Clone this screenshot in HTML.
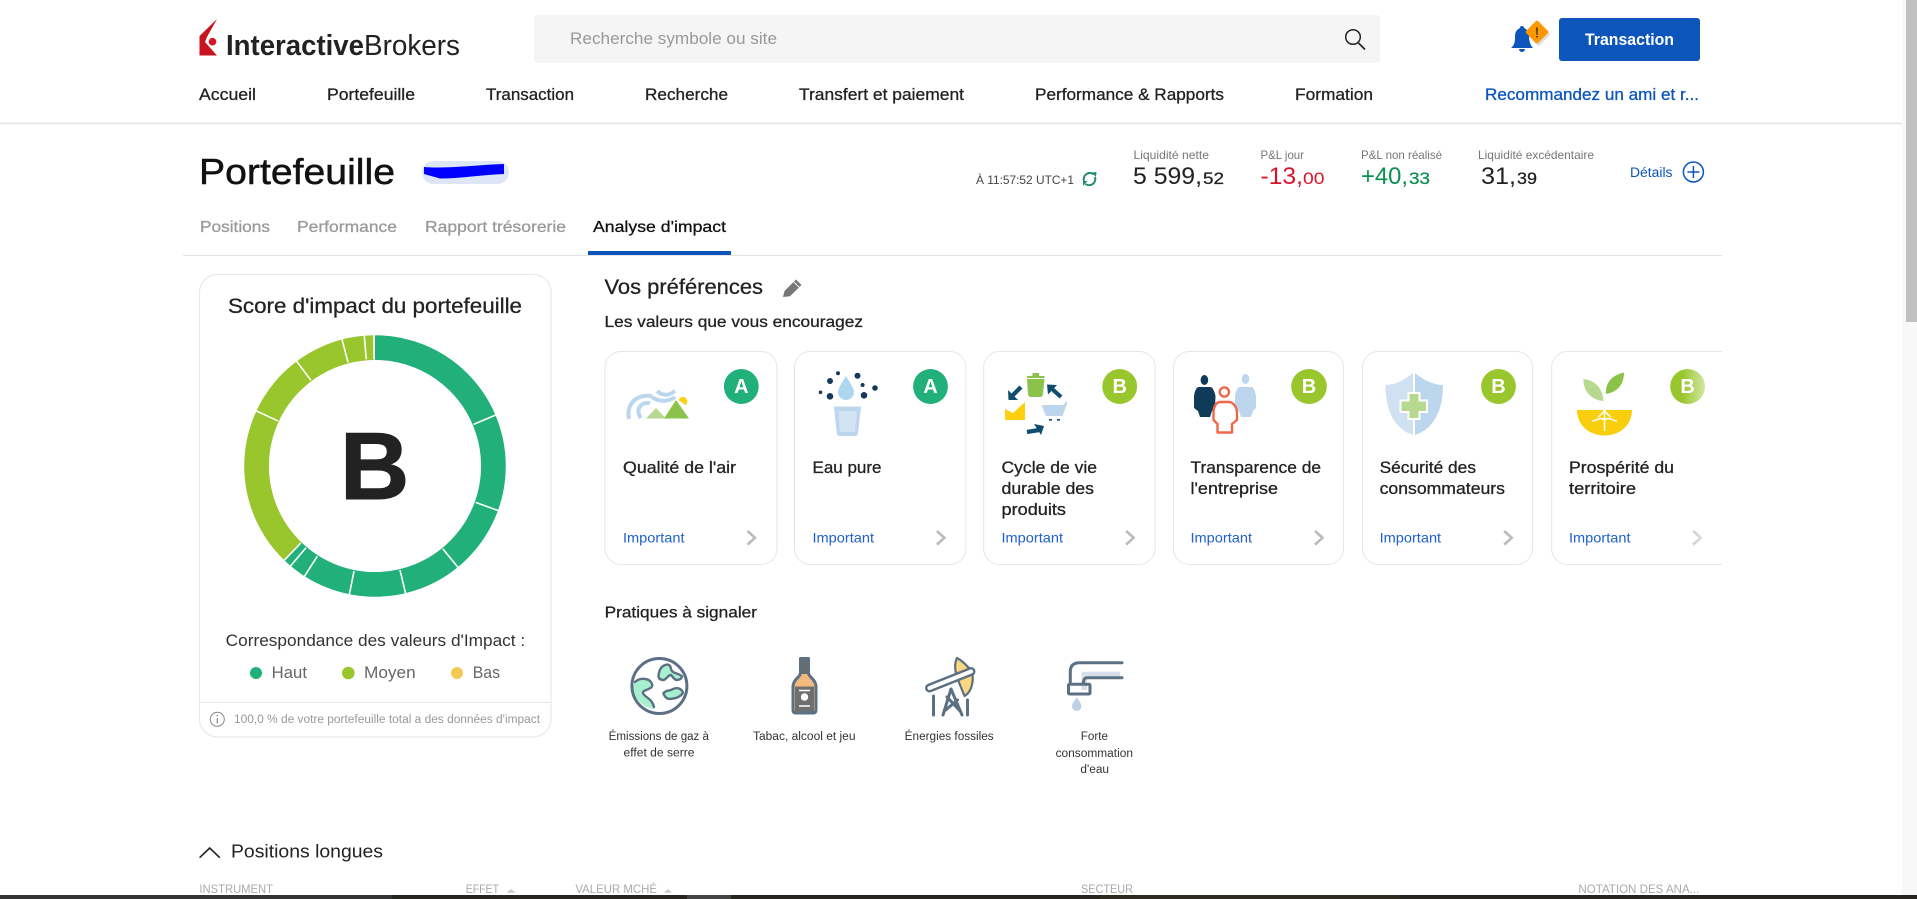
<!DOCTYPE html>
<html lang="fr">
<head>
<meta charset="utf-8">
<title>Portefeuille - Analyse d'impact</title>
<style>
html,body{margin:0;padding:0;background:#fff;width:1917px;height:899px;overflow:hidden}
svg{display:block;font-family:"Liberation Sans",Arial,sans-serif}
.m{stroke-width:.28}
.d{fill:#222;stroke:#222}
.g{fill:#999;stroke:#999}
.b{fill:#0b55bb;stroke:#0b55bb}
.card{fill:#fff;stroke:#e6e6e6;stroke-width:1}
.chev{fill:none;stroke:#bbb;stroke-width:2.6}
.sl{fill:none;stroke:#5b7083;stroke-width:3;stroke-linecap:round;stroke-linejoin:round}
</style>
</head>
<body>
<svg width="1917" height="899" viewBox="0 0 1917 899" xmlns="http://www.w3.org/2000/svg">
<rect width="1917" height="899" fill="#fff"/>

<!-- header -->
<rect x="0" y="122" width="1902" height="1" fill="#f2f2f2"/>
<rect x="0" y="123" width="1902" height="1" fill="#e8e8e8"/>
<rect x="0" y="124" width="1902" height="1" fill="#f7f7f7"/>
<path d="M217 19 L199.5 36 L199.5 55.5 L217 55.5 L205 42 L207 37 Z" fill="#c8141f"/>
<circle cx="212.5" cy="41.7" r="3.8" fill="#d81222"/>
<text x="226" y="55" font-size="29" font-weight="700" fill="#222" textLength="138" lengthAdjust="spacingAndGlyphs">Interactive</text>
<text x="364" y="55" font-size="29" fill="#222" textLength="96" lengthAdjust="spacingAndGlyphs">Brokers</text>
<rect x="534" y="15" width="846" height="48" rx="3" fill="#f5f5f5"/>
<text x="570" y="44" font-size="16.5" fill="#999" textLength="207" lengthAdjust="spacingAndGlyphs">Recherche symbole ou site</text>
<circle cx="1353" cy="37" r="7.3" fill="none" stroke="#222" stroke-width="1.5"/>
<line x1="1358.5" y1="43" x2="1365" y2="49.5" stroke="#222" stroke-width="1.7"/>
<path d="M1511 48 C1515 45 1515 40 1515 36 C1515 31 1518 29 1520 28 a2 2 0 0 1 4 0 C1527 29 1529 32 1529 36 C1529 40 1530 45 1533 48 Z" fill="#0b55bb"/>
<path d="M1519 49 h6 a3 3 0 0 1 -6 0Z" fill="#0b55bb"/>
<rect x="1530" y="26" width="17" height="17" rx="2" transform="rotate(45 1538.5 34.5)" fill="#000" opacity=".13"/>
<rect x="1528.5" y="23.5" width="17" height="17" rx="2" transform="rotate(45 1537 32)" fill="#ff9800"/>
<text x="1537" y="37.5" font-size="15" text-anchor="middle" fill="#222">!</text>
<rect x="1559" y="18" width="141" height="43" rx="3" fill="#0b55bb"/>
<text x="1585" y="45" font-size="17" font-weight="700" fill="#fff" textLength="89" lengthAdjust="spacingAndGlyphs">Transaction</text>

<g class="m d" font-size="16.5">
<text x="199" y="100" textLength="57" lengthAdjust="spacingAndGlyphs">Accueil</text>
<text x="327" y="100" textLength="88" lengthAdjust="spacingAndGlyphs">Portefeuille</text>
<text x="486" y="100" textLength="88" lengthAdjust="spacingAndGlyphs">Transaction</text>
<text x="645" y="100" textLength="83" lengthAdjust="spacingAndGlyphs">Recherche</text>
<text x="799" y="100" textLength="165" lengthAdjust="spacingAndGlyphs">Transfert et paiement</text>
<text x="1035" y="100" textLength="189" lengthAdjust="spacingAndGlyphs">Performance &amp; Rapports</text>
<text x="1295" y="100" textLength="78" lengthAdjust="spacingAndGlyphs">Formation</text>
</g>
<text class="m b" x="1485" y="100" font-size="16.5" textLength="214" lengthAdjust="spacingAndGlyphs">Recommandez un ami et r...</text>

<!-- scrollbar -->
<rect x="1902" y="0" width="15" height="899" fill="#f8f8f8"/>
<rect x="1906" y="0" width="11" height="322" fill="#c1c1c1"/>

<!-- page title -->
<text x="199" y="184" font-size="36" fill="#111" stroke="#111" stroke-width=".5" textLength="196" lengthAdjust="spacingAndGlyphs">Portefeuille</text>
<rect x="422" y="161" width="87" height="23" rx="11.5" fill="#dce6f7"/>
<path d="M424 167 C445 169 475 165 504 164 L504 174 C480 175 460 178.5 440 178.5 L424 174 Z" fill="#0000ff"/>

<!-- stats -->
<text x="976" y="184" font-size="12" fill="#444" textLength="98" lengthAdjust="spacingAndGlyphs">À 11:57:52 UTC+1</text>
<path d="M1084 181 A6.2 6.2 0 0 1 1094 174.5 M1095 177 A6.2 6.2 0 0 1 1085.5 184" fill="none" stroke="#1f8a70" stroke-width="2"/>
<path d="M1092 172.5 L1096.5 172 L1096 177 Z M1083 181 L1087.5 181 L1083 186 Z" fill="#1f8a70"/>
<g font-size="12" fill="#777">
<text x="1133.5" y="159" textLength="75.5" lengthAdjust="spacingAndGlyphs">Liquidité nette</text>
<text x="1260.5" y="159" textLength="43.5" lengthAdjust="spacingAndGlyphs">P&amp;L jour</text>
<text x="1361" y="159" textLength="81" lengthAdjust="spacingAndGlyphs">P&amp;L non réalisé</text>
<text x="1478" y="159" textLength="116" lengthAdjust="spacingAndGlyphs">Liquidité excédentaire</text>
</g>
<g font-size="24" fill="#222">
<text x="1133" y="184" textLength="69" lengthAdjust="spacingAndGlyphs">5 599,</text>
<text x="1203" y="184" font-size="17" class="m" stroke="#222" textLength="21" lengthAdjust="spacingAndGlyphs">52</text>
<text x="1481" y="184" textLength="35" lengthAdjust="spacingAndGlyphs">31,</text>
<text x="1517" y="184" font-size="17" class="m" stroke="#222" textLength="20" lengthAdjust="spacingAndGlyphs">39</text>
</g>
<g font-size="24" fill="#d9142a">
<text x="1260.5" y="184" textLength="42.5" lengthAdjust="spacingAndGlyphs">-13,</text>
<text x="1303" y="184" font-size="17" textLength="21.5" lengthAdjust="spacingAndGlyphs">00</text>
</g>
<g font-size="24" fill="#0a9152">
<text x="1361" y="184" textLength="47" lengthAdjust="spacingAndGlyphs">+40,</text>
<text x="1409" y="184" font-size="17" class="m" stroke="#0a9152" textLength="21" lengthAdjust="spacingAndGlyphs">33</text>
</g>
<text x="1630" y="177" font-size="13.5" fill="#0b55bb" textLength="42.5" lengthAdjust="spacingAndGlyphs">Détails</text>
<circle cx="1693.4" cy="172" r="10" fill="none" stroke="#0b55bb" stroke-width="1.5"/>
<path d="M1693.4 166v12M1687.4 172h12" stroke="#0b55bb" stroke-width="1.5"/>

<!-- tabs -->
<g class="m g" font-size="16">
<text x="200" y="232" textLength="70" lengthAdjust="spacingAndGlyphs">Positions</text>
<text x="297" y="232" textLength="100" lengthAdjust="spacingAndGlyphs">Performance</text>
<text x="425" y="232" textLength="141" lengthAdjust="spacingAndGlyphs">Rapport trésorerie</text>
</g>
<text class="m" x="593" y="232" font-size="16" fill="#111" stroke="#111" textLength="133" lengthAdjust="spacingAndGlyphs">Analyse d'impact</text>
<rect x="183" y="255" width="1539" height="1" fill="#e4e4e4"/>
<rect x="588" y="251" width="143" height="4" fill="#0b55bb"/>

<!-- left card -->
<rect class="card" x="199.5" y="274.5" width="351.5" height="462.5" rx="18"/>
<text class="m d" x="228" y="313" font-size="21" textLength="294" lengthAdjust="spacingAndGlyphs">Score d'impact du portefeuille</text>
<circle cx="375" cy="466" r="118.4" fill="none" stroke="#21b07a" stroke-width="24.7" pathLength="360" stroke-dasharray="223.9 136.1" transform="rotate(-90 375 466)"/>
<circle cx="375" cy="466" r="118.4" fill="none" stroke="#98c62c" stroke-width="24.7" pathLength="360" stroke-dasharray="135.5 224.5" stroke-dashoffset="-223.9" transform="rotate(-90 375 466)"/>
<g stroke="#fff" stroke-width="1.6">
<line x1="375" y1="333" x2="375" y2="359" transform="rotate(67.1 375 466)"/>
<line x1="375" y1="333" x2="375" y2="359" transform="rotate(109.9 375 466)"/>
<line x1="375" y1="333" x2="375" y2="359" transform="rotate(140.7 375 466)"/>
<line x1="375" y1="333" x2="375" y2="359" transform="rotate(166.5 375 466)"/>
<line x1="375" y1="333" x2="375" y2="359" transform="rotate(191.3 375 466)"/>
<line x1="375" y1="333" x2="375" y2="359" transform="rotate(212.6 375 466)"/>
<line x1="375" y1="333" x2="375" y2="359" transform="rotate(220.2 375 466)"/>
<line x1="375" y1="333" x2="375" y2="359" transform="rotate(223.9 375 466)"/>
<line x1="375" y1="333" x2="375" y2="359" transform="rotate(294.9 375 466)"/>
<line x1="375" y1="333" x2="375" y2="359" transform="rotate(323.2 375 466)"/>
<line x1="375" y1="333" x2="375" y2="359" transform="rotate(345.4 375 466)"/>
<line x1="375" y1="333" x2="375" y2="359" transform="rotate(355.3 375 466)"/>
<line x1="375" y1="333" x2="375" y2="359" transform="rotate(359.5 375 466)"/>
</g>
<text x="340" y="499" font-size="96" font-weight="700" fill="#222" stroke="#222" stroke-width="1">B</text>
<text x="225.7" y="646" font-size="16.5" fill="#333" textLength="299.5" lengthAdjust="spacingAndGlyphs">Correspondance des valeurs d'Impact :</text>
<circle cx="256" cy="673" r="6" fill="#21b07a"/>
<circle cx="348.3" cy="673" r="6.3" fill="#98c62c"/>
<circle cx="457" cy="673" r="6" fill="#f4c955"/>
<g font-size="16.5" fill="#666">
<text x="271.7" y="678" textLength="35.3" lengthAdjust="spacingAndGlyphs">Haut</text>
<text x="364" y="678" textLength="51.7" lengthAdjust="spacingAndGlyphs">Moyen</text>
<text x="472.7" y="678" textLength="27.3" lengthAdjust="spacingAndGlyphs">Bas</text>
</g>
<rect x="200" y="702" width="351" height="1" fill="#e6e6e6"/>
<circle cx="217.3" cy="719.3" r="7" fill="none" stroke="#888" stroke-width="1"/>
<path d="M217.3 718v5.5" stroke="#888" stroke-width="1.2"/>
<circle cx="217.3" cy="715.6" r=".8" fill="#888"/>
<text x="234" y="723" font-size="11.5" fill="#999" textLength="306" lengthAdjust="spacingAndGlyphs">100,0 % de votre portefeuille total a des données d'impact</text>

<!-- preferences -->
<text class="m d" x="604.5" y="294" font-size="21" textLength="158.5" lengthAdjust="spacingAndGlyphs">Vos préférences</text>
<path d="M783 297 L784.5 291 L796 279.5 L801.5 285 L790 296.3 Z" fill="#777"/>
<path d="M793.7 281.8 l5.5 5.5" stroke="#fff" stroke-width="1"/>
<text class="m d" x="604.5" y="327" font-size="16" textLength="258.5" lengthAdjust="spacingAndGlyphs">Les valeurs que vous encouragez</text>

<!-- cards -->
<rect class="card" x="605" y="351.5" width="172" height="213" rx="16"/>
<rect class="card" x="794.4" y="351.5" width="171.5" height="213" rx="16"/>
<rect class="card" x="983.6" y="351.5" width="171.5" height="213" rx="16"/>
<rect class="card" x="1173.5" y="351.5" width="170" height="213" rx="16"/>
<rect class="card" x="1362.5" y="351.5" width="170" height="213" rx="16"/>
<rect class="card" x="1551.6" y="351.5" width="190" height="213" rx="16"/>

<!-- icon air -->
<g fill="none" stroke="#bcd6ee" stroke-width="4">
<path d="M629 419 C626 403 637 394 652 396"/>
<path d="M641 418 C635 410 640 402 650 403"/>
<path d="M657 391 C664 397 670 395 675 391"/>
<path d="M652 397 C660 403 670 401 675 397"/>
</g>
<path d="M646 418.5 L656 408 L666 418.5 Z" fill="#b7d98f"/>
<path d="M664 418.5 L676 400 L689 418.5 Z" fill="#8bc34a"/>
<path d="M678.5 400 a4.5 4.5 0 1 1 7 5 Z" fill="#fdd00f"/>

<!-- icon water -->
<g fill="#16395b">
<circle cx="838" cy="373.3" r="2"/><circle cx="857.5" cy="375.7" r="3"/><circle cx="830" cy="381" r="3"/><circle cx="862.6" cy="385" r="2"/><circle cx="875" cy="388" r="2.8"/><circle cx="820.5" cy="392.3" r="1.8"/><circle cx="830" cy="396.3" r="3.3"/><circle cx="864" cy="395.3" r="3.3"/>
</g>
<path d="M846 376 C850 383 854 388 854 392 A8 8 0 0 1 838 392 C838 388 842 383 846 376 Z" fill="#aed6f1"/>
<path d="M834 406.5 H861 L858 433 Q857.8 436 855 436 H840 Q837 436 836.8 433 Z" fill="#bcd6ee"/>
<path d="M838 411 H857 L855 432 H840 Z" fill="#d2e3f3"/>

<!-- icon cycle -->
<path d="M1027 379 H1044.5 L1043 394 Q1042.5 397 1040 397 H1031 Q1028.5 397 1028 394 Z" fill="#8bc34a"/>
<path d="M1027 376 H1044.5 V378 H1027 Z M1032.5 373 H1039 V376 H1032.5 Z" fill="#8bc34a"/>
<g fill="#0f4c6e">
<path d="M1008 390 L1008.5 400 L1018 400 Z"/>
<path d="M1047 384.5 L1057 385 L1048 394.5 Z"/>
<path d="M1034 424 L1044 426 L1041 435 Z"/>
</g>
<g stroke="#0f4c6e" stroke-width="4.2" fill="none">
<path d="M1021 387 L1012 396"/>
<path d="M1061 397 L1051 388"/>
<path d="M1027 432 L1039 430"/>
</g>
<path d="M1041.5 405 H1063 L1067 401 V404 L1062.5 416 H1046 Z" fill="#bcd6ee"/>
<path d="M1049 419 h3 v1.6 h-3z M1057 419 h3 v1.6 h-3z" fill="#0f4c6e"/>
<path d="M1005 409 L1013 413 L1025 402 V420 H1005 Z" fill="#fdd00f"/>

<!-- icon people -->
<ellipse cx="1245.5" cy="379" rx="3.8" ry="5" fill="#bcd6ee"/>
<path d="M1239 387 H1252 Q1255 389 1256 396 L1256 408 L1253 411 L1251 417 H1241 L1239 411 L1235 408 L1235 396 Q1236 389 1239 387 Z" fill="#bcd6ee"/>
<ellipse cx="1204.4" cy="380" rx="3.8" ry="5" fill="#0f3a58"/>
<path d="M1198 387 H1211 Q1214 389 1215.5 396 L1215 408 L1212 411 L1210 417 H1200 L1198 411 L1194 408 L1194 396 Q1195 389 1198 387 Z" fill="#0f3a58"/>
<circle cx="1224.4" cy="392" r="4.6" fill="none" stroke="#f0684a" stroke-width="2.4"/>
<path d="M1219 402 H1230 Q1236 404 1237 412 L1237 420 L1232 424 V432.5 H1217.5 V424 L1213.5 420 L1213.5 412 Q1214 404 1219 402 Z" fill="#fff" stroke="#f0684a" stroke-width="2.4" stroke-linejoin="round"/>

<!-- icon shield -->
<path d="M1413 373 V435 C1400 431 1385.5 418 1385.5 385 C1396 385 1406 379 1413 373 Z" fill="#d0e1f2"/>
<path d="M1415 373 V435 C1428 431 1443 418 1443 385 C1433 385 1422 379 1415 373 Z" fill="#bcd6ee"/>
<path d="M1408.5 393 H1419.5 V400.5 H1427 V412 H1419.5 V419 H1408.5 V412 H1400.5 V400.5 H1408.5 Z" fill="#b7d98f" stroke="#fff" stroke-width="2"/>

<!-- icon plant -->
<path d="M1583.5 379 C1596 380 1603 390 1603.5 401 C1591 400 1583 391 1583.5 379 Z" fill="#b7d98f"/>
<path d="M1624 372.5 C1624 384 1618 392 1606 394 C1605 383 1612 375 1624 372.5 Z" fill="#8bc34a"/>
<path d="M1577 410 H1632 C1632 425 1620 435.5 1604.5 435.5 C1589 435.5 1577 425 1577 410 Z" fill="#f9ce0c"/>
<path d="M1604.5 410 V431 M1604.5 420 C1600 416 1596 421 1592 421 M1604.5 420 C1609 416 1613 421 1617 421 M1604.5 410 C1603 414 1600 415 1598 417 M1604.5 410 C1606 414 1609 415 1611 417" stroke="#fff" stroke-width="1.5" fill="none"/>

<!-- badges -->
<g>
<ellipse cx="741.3" cy="386.5" rx="17.4" ry="17.5" fill="#21b07a"/>
<ellipse cx="930.5" cy="386.5" rx="17.4" ry="17.5" fill="#21b07a"/>
<ellipse cx="1119.7" cy="386.5" rx="17.4" ry="17.5" fill="#98c62c"/>
<ellipse cx="1309" cy="386.5" rx="17.8" ry="17.5" fill="#98c62c"/>
<ellipse cx="1498.5" cy="386.5" rx="17.4" ry="17.5" fill="#98c62c"/>
<ellipse cx="1687.6" cy="386.5" rx="17.4" ry="17.5" fill="#98c62c"/>
</g>
<g font-size="20" font-weight="700" fill="#fff" text-anchor="middle">
<text x="741.3" y="393">A</text><text x="930.5" y="393">A</text><text x="1119.7" y="393">B</text><text x="1309" y="393">B</text><text x="1498.5" y="393">B</text><text x="1687.6" y="393">B</text>
</g>

<!-- card titles -->
<g class="m d" font-size="16.5">
<text x="623" y="473" textLength="113" lengthAdjust="spacingAndGlyphs">Qualité de l'air</text>
<text x="812.5" y="473" textLength="69" lengthAdjust="spacingAndGlyphs">Eau pure</text>
<text x="1001.5" y="473" textLength="95.5" lengthAdjust="spacingAndGlyphs">Cycle de vie</text>
<text x="1001.5" y="494" textLength="92.5" lengthAdjust="spacingAndGlyphs">durable des</text>
<text x="1001.5" y="515" textLength="64.5" lengthAdjust="spacingAndGlyphs">produits</text>
<text x="1190.5" y="473" textLength="130.5" lengthAdjust="spacingAndGlyphs">Transparence de</text>
<text x="1190.5" y="494" textLength="87.5" lengthAdjust="spacingAndGlyphs">l'entreprise</text>
<text x="1379.6" y="473" textLength="96.4" lengthAdjust="spacingAndGlyphs">Sécurité des</text>
<text x="1379.6" y="494" textLength="125.4" lengthAdjust="spacingAndGlyphs">consommateurs</text>
<text x="1569" y="473" textLength="105" lengthAdjust="spacingAndGlyphs">Prospérité du</text>
<text x="1569" y="494" textLength="67" lengthAdjust="spacingAndGlyphs">territoire</text>
</g>
<g font-size="14" fill="#1f5fcf">
<text x="623" y="542.5" textLength="61.5" lengthAdjust="spacingAndGlyphs">Important</text>
<text x="812.5" y="542.5" textLength="61.5" lengthAdjust="spacingAndGlyphs">Important</text>
<text x="1001.5" y="542.5" textLength="61.5" lengthAdjust="spacingAndGlyphs">Important</text>
<text x="1190.5" y="542.5" textLength="61.5" lengthAdjust="spacingAndGlyphs">Important</text>
<text x="1379.6" y="542.5" textLength="61.5" lengthAdjust="spacingAndGlyphs">Important</text>
<text x="1569" y="542.5" textLength="61.5" lengthAdjust="spacingAndGlyphs">Important</text>
</g>
<path class="chev" d="M747.5 531 l7.5 6.8 -7.5 6.8"/>
<path class="chev" d="M936.9 531 l7.5 6.8 -7.5 6.8"/>
<path class="chev" d="M1126.1 531 l7.5 6.8 -7.5 6.8"/>
<path class="chev" d="M1315 531 l7.5 6.8 -7.5 6.8"/>
<path class="chev" d="M1504.2 531 l7.5 6.8 -7.5 6.8"/>
<path class="chev" d="M1693.2 531 l7.5 6.8 -7.5 6.8"/>

<!-- fade on last card: badge and chevron only, the border stays visible up to the clip edge -->
<defs><linearGradient id="fade" x1="0" x2="1" y1="0" y2="0"><stop offset="0" stop-color="#fff" stop-opacity="0"/><stop offset="1" stop-color="#fff"/></linearGradient></defs>
<rect x="1682" y="362" width="40" height="50" fill="url(#fade)"/>
<rect x="1682" y="525" width="40" height="25" fill="url(#fade)"/>
<rect x="1722" y="345" width="24" height="225" fill="#fff"/>

<!-- practices -->
<text class="m d" x="604.6" y="617.7" font-size="16" textLength="152.4" lengthAdjust="spacingAndGlyphs">Pratiques à signaler</text>

<!-- globe -->
<circle cx="659.4" cy="686" r="27" fill="#fff"/>
<path d="M636 682 C640 677 650 678 652 684 C654 690 642 689 643 693 C644 697 652 698 654 709 C644 708 632 698 632 686 Z" fill="#a8efcf"/>
<path class="sl" style="stroke-width:2.4" d="M635 682 C640 677 650 678 652 684 C654 690 642 689 643 693 C644 697 652 698 654 707"/>
<path class="sl" style="fill:#a8efcf;stroke-width:2.4" d="M661.6 667.3 C664 665 667 664 669 665 C672 667 670 670 672.7 671.7 C676 674 681 674 682 676.7 C681 680 678 680 676.4 680 C673 679 672 675 670.8 675 C668 675 666 680 663.4 680 C660 680 658 678 658.6 675 C659 672 660 669 661.6 667.3 Z"/>
<path class="sl" style="fill:#a8efcf;stroke-width:2.4" d="M663.4 693.3 C666 690 668 691 670.8 690 C673 689 676 687.5 678.2 688.3 C681 689 683 691 682.7 693.3 C681 696 677 698 674.5 698.3 C671 699 668 699 667 698.3 C665 697 664 695 663.4 693.3 Z"/>
<circle class="sl" cx="659.4" cy="686" r="27.5"/>

<!-- bottle -->
<path d="M801 660 H808 V673 C808 677 815 679 815.5 686 V711 Q815.5 713 813 713 H796 Q793.5 713 793.5 711 V686 C794 679 801 677 801 673 Z" fill="#f4b97f"/>
<rect x="801" y="660" width="7" height="14" fill="#6b6b6b"/>
<rect x="795" y="686.5" width="19" height="25" fill="#6f6f6f"/>
<circle cx="804.5" cy="697" r="3.7" fill="#fff"/>
<path d="M799 690.5 h11 M799 706 h11" stroke="#fff" stroke-width="1.4"/>
<path class="sl" d="M800.5 658.5 H808.5 V673 C808.5 677 815.5 679 816 686 V710 Q816 713 813 713 H796 Q793 713 793 710 V686 C793.5 679 800.5 677 800.5 673 Z"/>

<!-- pump -->
<path d="M957 658 C954 664 955 672 958 680 L964.5 696 C972 692 974 680 972 672 C968 666 961 660 957 658 Z" fill="#fcd77f" stroke="#5b7083" stroke-width="2.2" stroke-linejoin="round"/>
<path class="sl" d="M951 689 L943 715 M951 689 L962 715 M933.5 696 V715 M967.5 700 V715 M944.5 711 L957.5 700 M947 697 L960 711"/>
<line x1="929.5" y1="688" x2="971" y2="671.5" stroke="#5b7083" stroke-width="9" stroke-linecap="round"/>
<line x1="929.5" y1="688" x2="971" y2="671.5" stroke="#fff" stroke-width="4" stroke-linecap="round"/>

<!-- faucet -->
<path d="M1081.6 671.7 H1120 V677.7 H1087 V690 H1081.6 Z" fill="#d5e0ec"/>
<path class="sl" d="M1122 662.7 H1079.7 Q1070.3 662.7 1070.3 671.7 V684 M1122 677.7 H1087 Q1083.3 677.7 1083.3 684"/>
<rect class="sl" x="1068.5" y="684.3" width="21.5" height="9.7" rx="1"/>
<path d="M1076.7 697.3 C1079 701 1081.5 703.5 1081.5 706.8 A4.8 4.8 0 0 1 1072 706.8 C1072 703.5 1074.5 701 1076.7 697.3 Z" fill="#bcd1e6"/>

<g font-size="11.5" fill="#333">
<text x="608.7" y="740" textLength="100.3" lengthAdjust="spacingAndGlyphs">Émissions de gaz à</text>
<text x="623.5" y="756.7" textLength="71" lengthAdjust="spacingAndGlyphs">effet de serre</text>
<text x="753" y="740" textLength="102.5" lengthAdjust="spacingAndGlyphs">Tabac, alcool et jeu</text>
<text x="904.7" y="740" textLength="89" lengthAdjust="spacingAndGlyphs">Énergies fossiles</text>
<text x="1080.8" y="740" textLength="27.2" lengthAdjust="spacingAndGlyphs">Forte</text>
<text x="1055.6" y="757" textLength="77.4" lengthAdjust="spacingAndGlyphs">consommation</text>
<text x="1080.4" y="773" textLength="28.6" lengthAdjust="spacingAndGlyphs">d'eau</text>
</g>

<!-- positions longues -->
<path d="M199.6 857.7 L209.7 848 L219.8 857.7" fill="none" stroke="#222" stroke-width="1.6"/>
<text x="231" y="857.3" font-size="18" fill="#222" textLength="152" lengthAdjust="spacingAndGlyphs">Positions longues</text>
<g font-size="12" fill="#aaa">
<text x="199.4" y="893" textLength="73.6" lengthAdjust="spacingAndGlyphs">INSTRUMENT</text>
<text x="465.7" y="893" textLength="33.3" lengthAdjust="spacingAndGlyphs">EFFET</text>
<text x="575.4" y="893" textLength="81.6" lengthAdjust="spacingAndGlyphs">VALEUR MCHÉ</text>
<text x="1081" y="893" textLength="52" lengthAdjust="spacingAndGlyphs">SECTEUR</text>
<text x="1578.4" y="893" textLength="121" lengthAdjust="spacingAndGlyphs">NOTATION DES ANA...</text>
</g>
<path d="M506.5 892.7 L511 889 L515.7 892.7 Z M663.7 892.7 L668 889 L672 892.7 Z" fill="#ccc"/>

<!-- bottom strip -->
<rect x="0" y="895" width="1917" height="4" fill="#26241f"/>
<rect x="0" y="895" width="392" height="4" fill="#333"/>
<rect x="687" y="895" width="44" height="4" fill="#444"/>
<rect x="1100" y="895" width="300" height="4" fill="#2e2a20"/>
</svg>
</body>
</html>
